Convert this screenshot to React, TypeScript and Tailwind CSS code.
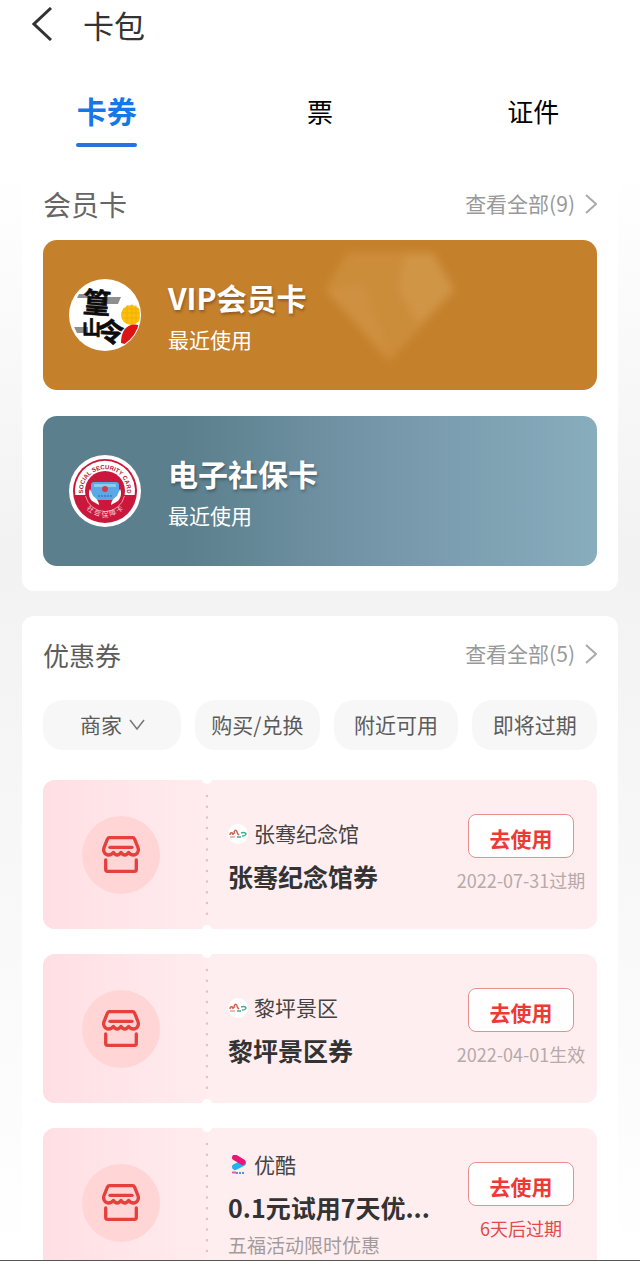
import React, { useState } from 'react';

type Coupon = {
  id: number;
  shop: string;
  title: string;
  note?: string;
  status: string;
  urgent?: boolean;
  logo: 'scenic' | 'youku';
};

const tabs = ['卡券', '票', '证件'];
const filters = ['购买/兑换', '附近可用', '即将过期'];

const coupons: Coupon[] = [
  { id: 1, shop: '张骞纪念馆', title: '张骞纪念馆券', status: '2022-07-31过期', logo: 'scenic' },
  { id: 2, shop: '黎坪景区', title: '黎坪景区券', status: '2022-04-01生效', logo: 'scenic' },
  { id: 3, shop: '优酷', title: '0.1元试用7天优...', note: '五福活动限时优惠', status: '6天后过期', urgent: true, logo: 'youku' },
];

const HuanglingLogo = () => (
  <svg viewBox="0 0 72 72" className="size-[72px] shrink-0 overflow-visible" aria-hidden="true">
    <defs>
      <clipPath id="huangling">
        <circle cx="36" cy="36" r="35" />
      </clipPath>
    </defs>
    <circle cx="36" cy="36" r="36" fill="#fff" />
    <g clipPath="url(#huangling)">
      <path d="M10 15h12l-2 4H8zM34 18h18l-3 7H32zM5 48h14v6H8z" fill="#8f8f8f" />
      <circle cx="62" cy="36" r="10" fill="#fbbf0c" />
      <path d="M52 34h20M54 30h18M53 39h19M58 26v18M63 25v20M67 26v18" stroke="#e8a800" strokeWidth="0.6" />
      <path d="M52 64c0-9 3-16 10-18 4-1 7 0 9 1l-8 20z" fill="#dd1414" />
    </g>
    <g fill="#0c0c0c" stroke="#0c0c0c" strokeWidth="0.6" strokeLinejoin="round" fontWeight="700">
      <text x="14" y="34" fontSize="28" transform="rotate(4 28 22)">篁</text>
      <text x="13" y="56" fontSize="19">山</text>
      <text x="28" y="63" fontSize="27" transform="rotate(4 42 53)">令</text>
    </g>
  </svg>
);

const SocialSecurityLogo = () => (
  <svg viewBox="0 0 72 72" className="size-[72px] shrink-0 overflow-visible" aria-hidden="true">
    <defs>
      <path id="arcTop" d="M15.700 44.600A22 22 0 1 1 56.300 44.600" />
      <path id="arcBottom" d="M12 47A27 27 0 0 0 60 47" />
    </defs>
    <circle cx="36" cy="36" r="36" fill="#fff" />
    <circle cx="36" cy="36" r="32" fill="#c9183c" />
    <path d="M6.300 40A30 30 0 1 1 65.700 40z" fill="#fff" />
    <circle cx="36" cy="36" r="20" fill="#c9183c" />
    <path d="M16.500 41A20 20 0 0 0 55.500 41" fill="none" stroke="#f3b9c3" strokeWidth="0.8" />
    <text fontSize="6" fontWeight="700" fill="#b81536" className="font-['Liberation_Sans',sans-serif]">
      <textPath href="#arcTop" startOffset="50%" textAnchor="middle">SOCIAL SECURITY CARD</textPath>
    </text>
    <text fontSize="7" fill="#f7cdd4">
      <textPath href="#arcBottom" startOffset="50%" textAnchor="middle">社 会 保 障 卡</textPath>
    </text>
    <rect x="22" y="27" width="28" height="18" rx="3" fill="#5aa9e6" />
    <path d="M25 29h22v3H25z" fill="#8ccbf5" />
    <circle cx="36" cy="34" r="3" fill="#d43a4c" />
    <path d="M29 41h14" stroke="#26659e" strokeDasharray="2 1" />
    <path d="M21 34c-2 3-1 9 2 12l7 4c0-4-3-7-6-9zM51 34c2 3 1 9-2 12l-7 4c0-4 3-7 6-9z" fill="#fff" />
  </svg>
);

const StoreIcon = () => (
  <svg viewBox="0 0 38 37" fill="none" stroke="#e6403c" strokeWidth="3.300" strokeLinejoin="round" strokeLinecap="round" className="h-[37px] w-[38px]" aria-hidden="true">
    <path d="M7.500 1.700h23c1 0 1.700.5 2.100 1.400l3.300 8.200c1.500 4-1 7.700-4.400 7.700-2.300 0-4-1-4.900-2.600-1 1.600-2.200 2.600-3.800 2.600s-2.900-1-3.800-2.600c-1 1.600-2.200 2.600-3.800 2.600s-2.900-1-3.800-2.600C10.400 18 8.700 19 6.500 19 3.100 19 .6 15.300 2.100 11.300l3.300-8.200c.4-.9 1.100-1.400 2.100-1.400z" />
    <path d="M8 11.300h22" />
    <path d="M3.700 24v9.500c0 1 .8 1.800 1.800 1.800h27c1 0 1.800-.8 1.800-1.800V24" />
  </svg>
);

const ShopLogo = ({ kind }: { kind: Coupon['logo'] }) =>
  kind === 'youku' ? (
    <svg viewBox="0 0 20 20" className="size-5" aria-hidden="true">
      <path d="M7 12l8-4" stroke="#22b4ee" strokeWidth="6" strokeLinecap="round" />
      <path d="M7 2.500l7.500 4.500" stroke="#ec1576" strokeWidth="6" strokeLinecap="round" />
      <path d="M4 17.500h4" stroke="#ec5a9a" strokeWidth="2" />
      <path d="M8 18h8" stroke="#5b8fd8" strokeWidth="2" strokeDasharray="2 1" />
    </svg>
  ) : (
    <svg viewBox="0 0 20 20" className="size-5" aria-hidden="true">
      <circle cx="10" cy="10" r="10" fill="#fff" />
      <path d="M2 11c0-3 3-3 3 0M6 10c0-4 2-5 3-2s1 2 2 3" stroke="#d8604e" strokeWidth="1.500" fill="none" />
      <path d="M2 13h5" stroke="#b98368" />
      <path d="M13 9c3-1 5 0 5 1s-2 2-4 2M9 13h4" stroke="#3fae93" strokeWidth="1.500" fill="none" />
    </svg>
  );

const SectionHeader = ({ title, count, large }: { title: string; count: number; large?: boolean }) => (
  <div className="flex h-16 items-center justify-between">
    <h2 className={large ? 'text-[28px] leading-[42px] text-[#666]' : 'text-[26px] text-[#5c5c5c]'}>{title}</h2>
    <a href="#all" className="flex items-center gap-[10px] text-[21px] text-[#999]">
      查看全部({count})
      <svg viewBox="0 0 12 20" className="h-5 w-3" fill="none" stroke="#aaa" strokeWidth="2" aria-hidden="true">
        <path d="M1 1l10 9L1 19" />
      </svg>
    </a>
  </div>
);

const MemberCard = ({ title, logo, className, children }: { title: string; logo: React.ReactNode; className: string; children?: React.ReactNode }) => (
  <a href="#card" className={`relative flex h-[150px] items-center gap-[27px] overflow-hidden rounded-[14px] pl-[26px] text-white ${className}`}>
    {children}
    {logo}
    <div className="relative pt-1">
      <h3 className="text-[30px] leading-[44px] font-bold text-shadow-[1px_2px_3px_rgb(0_0_0/0.3)]">{title}</h3>
      <p className="text-[21px] leading-10">最近使用</p>
    </div>
  </a>
);

const CouponCard = ({ coupon }: { coupon: Coupon }) => (
  <li className="relative flex h-[149px] shrink-0 overflow-hidden rounded-xl bg-[#ffeeef]">
    <div className="flex w-[164px] shrink-0 items-center bg-linear-to-r from-[#ffdfe4] to-[#ffecee] pl-[39px]">
      <div className="flex size-[78px] items-center justify-center rounded-full bg-[#ffd5d5]">
        <StoreIcon />
      </div>
    </div>
    <svg className="absolute top-0 left-[158px] h-[149px] w-3" viewBox="0 0 12 149" aria-hidden="true">
      <circle cx="6" cy="-1" r="5" fill="#fff" />
      <circle cx="6" cy="150" r="5" fill="#fff" />
      <path d="M6 16v120" stroke="#dcc3c6" strokeWidth="2.500" strokeLinecap="round" strokeDasharray="0 10.700" />
    </svg>
    <div className="flex min-w-0 flex-1 flex-col justify-center pl-[21px]">
      <div className="flex h-[42px] items-center gap-[6px] text-[21px] text-[#444]">
        <ShopLogo kind={coupon.logo} />
        {coupon.shop}
      </div>
      <h3 className="text-[25px] leading-[42px] font-bold whitespace-nowrap text-[#333]">{coupon.title}</h3>
      {coupon.note && <p className="text-[19px] leading-[34px] whitespace-nowrap text-[#a39b9b]">{coupon.note}</p>}
    </div>
    <div className="mr-[9px] flex w-[134px] shrink-0 flex-col items-center pt-[34px]">
      <button className="h-11 w-[106px] rounded-lg border border-[#e58f8f] bg-white pt-1 text-[21px] leading-none font-bold text-[#ee3a36]">去使用</button>
      <p className={`pt-2 text-lg whitespace-nowrap ${coupon.urgent ? 'text-[#e04a48]' : 'text-[#b5a9aa]'}`}>{coupon.status}</p>
    </div>
  </li>
);

export default function App() {
  const [active, setActive] = useState('卡券');

  return (
    <div className="flex h-screen flex-col overflow-hidden border-b border-[#555] bg-white font-['Noto_Sans_CJK_SC',sans-serif]">
      <header className="flex h-[52px] shrink-0 items-center gap-[31px] pb-1 pl-8">
        <button aria-label="返回">
          <svg viewBox="0 0 20 34" className="h-[34px] w-5" fill="none" stroke="#333" strokeWidth="3" aria-hidden="true">
            <path d="M19 1L2 17l17 16" />
          </svg>
        </button>
        <h1 className="text-[31px] leading-none text-[#333]">卡包</h1>
      </header>

      <div role="tablist" className="grid h-[120px] shrink-0 grid-cols-3 pt-[25px]">
        {tabs.map((tab) => (
          <button key={tab} role="tab" aria-selected={active === tab} onClick={() => setActive(tab)} className="flex h-[70px] flex-col items-center">
            <span className={active === tab ? 'text-[30px] leading-[66px] font-bold text-[#1677e8]' : 'text-[26px] leading-[68px] text-black'}>{tab}</span>
            {active === tab && <span className="h-1 w-[61px] shrink-0 rounded-full bg-[#2673e0]" />}
          </button>
        ))}
      </div>

      <main className="flex-1 overflow-y-auto bg-linear-to-b from-white via-[#f2f2f3] via-35% to-white px-[22px] [scrollbar-width:none]">
        <section className="rounded-b-xl bg-white px-[21px] pb-[25px]">
          <SectionHeader title="会员卡" count={9} large />
          <div className="flex flex-col gap-[26px] pt-1">
            <MemberCard title="VIP会员卡" logo={<HuanglingLogo />} className="bg-[#c5802b]">
              <svg viewBox="0 0 134 124" className="absolute top-1 left-[280px] h-[124px] w-[134px] blur-[4px]" aria-hidden="true">
                <path d="M24 8h86l22 38-66 72L2 46z" fill="#d7a052" opacity="0.4" />
                <path d="M82 10h28l20 36-34 34-20-34z" fill="#e0b878" opacity="0.2" />
                <path d="M4 46l36-6 26 74z" fill="#dcab62" opacity="0.15" />
              </svg>
            </MemberCard>
            <MemberCard title="电子社保卡" logo={<SocialSecurityLogo />} className="bg-linear-to-r from-[#5b7f8c] from-25% via-[#7596a9] via-60% to-[#88adbd]" />
          </div>
        </section>

        <section className="mt-[25px] rounded-t-xl bg-white px-[21px] pt-[6px] pb-6">
          <SectionHeader title="优惠券" count={5} />
          <div className="flex gap-[14px] pt-[14px] pb-[30px] text-[21px] text-[#5c5c5c]">
            <div className="relative w-[138px] shrink-0">
              <select aria-label="商家" className="h-[50px] w-full appearance-none rounded-[20px] bg-[#f7f7f7] pl-[37px]">
                <option>商家</option>
              </select>
              <svg viewBox="0 0 16 12" className="pointer-events-none absolute top-[19px] left-[86px] h-3 w-4" fill="none" stroke="#777" strokeWidth="1.500" aria-hidden="true">
                <path d="M1 1l7 9 7-9" />
              </svg>
            </div>
            {filters.map((name) => (
              <button key={name} className="h-[50px] flex-1 rounded-[20px] bg-[#f7f7f7] whitespace-nowrap">{name}</button>
            ))}
          </div>
          <ul className="flex flex-col gap-[25px]">
            {coupons.map((coupon) => (
              <CouponCard key={coupon.id} coupon={coupon} />
            ))}
          </ul>
        </section>
      </main>
    </div>
  );
}
